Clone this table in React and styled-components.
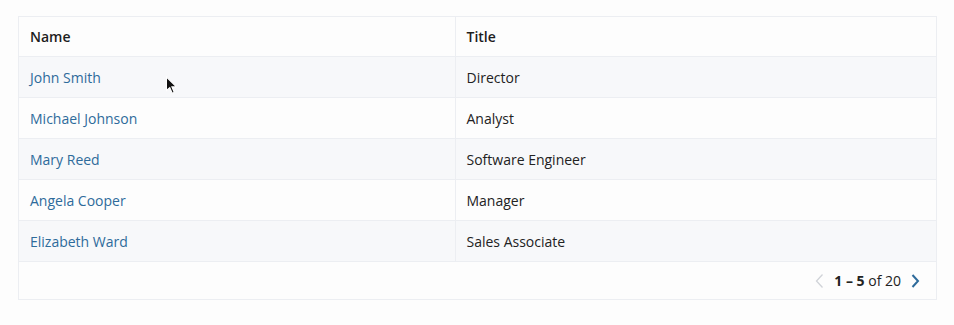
import React from "react";
import styled, { createGlobalStyle } from "styled-components";

const Global = createGlobalStyle`
  html, body { margin: 0; padding: 0; background: #fdfdfd; }
  body { font-family: "Open Sans", "Noto Sans", sans-serif; color: #222; }
`;

const Page = styled.div`
  padding: 16px 17px 0 18px;
  position: relative;
`;

const Card = styled.div`
  border: 1px solid #eceef2;
  background: #fdfdfd;
`;

const Table = styled.table`
  width: 100%;
  border-collapse: collapse;
  table-layout: fixed;
  font-size: 14px;
`;

const Th = styled.th`
  text-align: left;
  font-weight: 600;
  height: 39px;
  padding: 0 11px;
  color: #1e1e1e;
  border-right: ${(p) => (p.$last ? "none" : "1px solid #eceef2")};
  border-bottom: 1px solid #eceef2;
`;

const Tr = styled.tr`
  background: ${(p) => (p.$shaded ? "#f7f8fa" : "#fdfdfd")};
`;

const Td = styled.td`
  height: 40px;
  padding: 0 11px;
  border-right: ${(p) => (p.$last ? "none" : "1px solid #eceef2")};
  border-bottom: 1px solid #eceef2;
  color: #222;
`;

const NameLink = styled.a`
  color: #2e6b9b;
  text-decoration: none;
`;

const Footer = styled.div`
  height: 37px;
  display: flex;
  align-items: center;
  justify-content: flex-end;
  padding-right: 14px;
  gap: 7px;
  font-size: 14px;
  color: #222;
`;

const Range = styled.span`
  b { font-weight: 700; }
`;

const NavBtn = styled.button`
  background: none;
  border: none;
  padding: 0;
  display: flex;
  align-items: center;
  cursor: pointer;
`;

const Cursor = styled.svg`
  position: absolute;
  left: 165px;
  top: 76px;
`;

const rows = [
  ["John Smith", "Director"],
  ["Michael Johnson", "Analyst"],
  ["Mary Reed", "Software Engineer"],
  ["Angela Cooper", "Manager"],
  ["Elizabeth Ward", "Sales Associate"],
];

export default function App() {
  return (
    <>
      <Global />
      <Page>
        <Card>
          <Table>
            <colgroup>
              <col style={{ width: "436px" }} />
              <col />
            </colgroup>
            <thead>
              <tr>
                <Th>Name</Th>
                <Th $last>Title</Th>
              </tr>
            </thead>
            <tbody>
              {rows.map(([n, t], i) => (
                <Tr key={n} $shaded={i % 2 === 0}>
                  <Td>
                    <NameLink href="#">{n}</NameLink>
                  </Td>
                  <Td $last>{t}</Td>
                </Tr>
              ))}
            </tbody>
          </Table>
          <Footer>
            <NavBtn aria-label="Previous">
              <svg width="14" height="16" viewBox="0 0 14 16">
                <path d="M9.5 1.5 L3.5 8 L9.5 14.5" fill="none" stroke="#d0d3d8" strokeWidth="1.3" />
              </svg>
            </NavBtn>
            <Range>
              <b>1 – 5</b> of 20
            </Range>
            <NavBtn aria-label="Next">
              <svg width="14" height="16" viewBox="0 0 14 16">
                <path d="M4.5 2 L10 8 L4.5 14" fill="none" stroke="#2e6b9b" strokeWidth="2" />
              </svg>
            </NavBtn>
          </Footer>
        </Card>
        <Cursor width="14" height="20" viewBox="0 0 12 18">
          <path d="M1 1 L1 13 L4 10.5 L6.2 15.5 L8 14.7 L5.9 9.8 L10 9.8 Z" fill="#111" stroke="#fff" strokeWidth="1" />
        </Cursor>
      </Page>
    </>
  );
}
